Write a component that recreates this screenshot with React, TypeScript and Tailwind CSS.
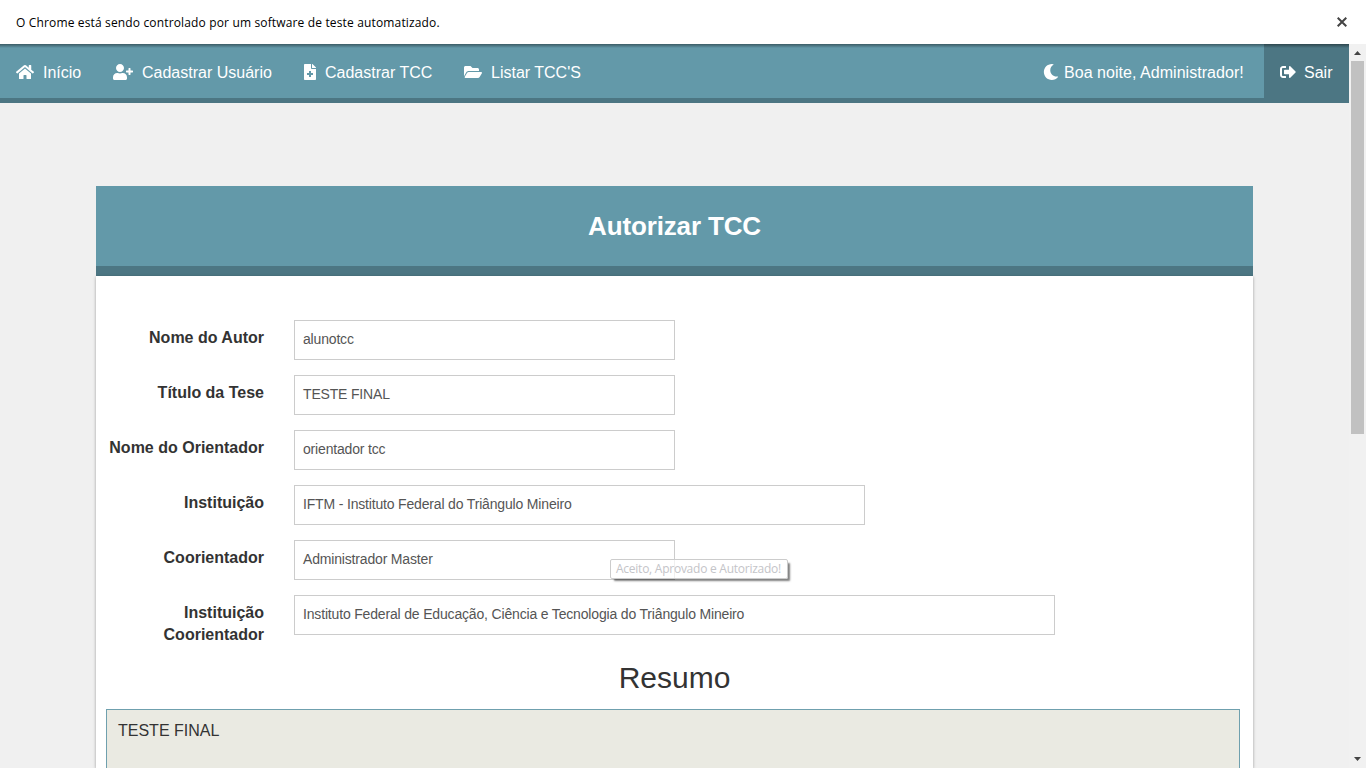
import type { ReactNode } from "react";
import {
  FaFileMedical,
  FaFolderOpen,
  FaHome,
  FaMoon,
  FaSignOutAlt,
  FaUserPlus,
} from "react-icons/fa";

function NavItem({ icon, label, className }: { icon: ReactNode; label: string; className: string }) {
  return (
    <a className={`flex h-full shrink-0 items-center whitespace-nowrap pl-4 ${className}`}>
      <span className="shrink-0 pb-px">{icon}</span>
      <span className="leading-6">{label}</span>
    </a>
  );
}

function Field({ label, value, width, badge }: { label: ReactNode; value: string; width: string; badge?: ReactNode }) {
  return (
    <div className="mb-[15px] flex h-10">
      <label className="w-[168px] shrink-0 pt-[7px] text-right text-base font-bold leading-[22px] text-[#333]">
        {label}
      </label>
      <div
        className={`relative ml-[30px] flex h-10 items-center border border-[#ccc] bg-white px-2 pb-0.5 text-sm text-[#555] ${width}`}
      >
        <span className="whitespace-nowrap tracking-[-0.17px]">{value}</span>
        {badge}
      </div>
    </div>
  );
}

function Tooltip() {
  return (
    <div className="absolute left-[315px] top-[18px] flex h-5 w-[178px] items-center rounded-[2px] border border-[#ccc] bg-white/70 pl-[5px] font-['Open_Sans',sans-serif] text-[12px] tracking-[-0.25px] text-[#c4c4c8] shadow-[3px_3px_2px_-1px_rgba(0,0,0,0.5)]">
      <span className="whitespace-nowrap">Aceito, Aprovado e Autorizado!</span>
    </div>
  );
}

export default function App() {
  return (
    <div className="flex h-[768px] w-[1366px] flex-col overflow-hidden bg-[#f0f0f0] font-['Liberation_Sans',Arial,sans-serif]">
      <div className="flex h-11 shrink-0 items-center justify-between bg-white pl-4 pr-[19px]">
        <span className="whitespace-nowrap pt-px font-['Open_Sans',sans-serif] text-[12px] tracking-[0.15px] text-black">
          O Chrome está sendo controlado por um software de teste automatizado.
        </span>
        <svg width="10" height="10" viewBox="0 0 10 10" stroke="#444" strokeWidth="2">
          <path d="M0.7 0.7 9.3 9.3M9.3 0.7 0.7 9.3" />
        </svg>
      </div>
      <div className="flex min-h-0 flex-1">
        <div className="relative flex w-[1349px] flex-col">
          <div className="pointer-events-none absolute inset-x-0 top-0 z-10 h-1 bg-linear-to-b from-black/40 to-transparent" />
          <nav className="flex h-[59px] shrink-0 justify-between border-b-[5px] border-[#4c7683] bg-[#6399a9] text-base text-white">
            <div className="flex pb-px pt-1">
              <NavItem className="w-[97px]" icon={<FaHome className="mr-[9px] h-4 w-[18px]" />} label="Início" />
              <NavItem className="w-[191px]" icon={<FaUserPlus className="mr-[9px] h-4 w-5" />} label="Cadastrar Usuário" />
              <NavItem className="w-[160px]" icon={<FaFileMedical className="mr-[9px] h-4 w-3" />} label="Cadastrar TCC" />
              <NavItem className="w-[160px]" icon={<FaFolderOpen className="mr-[9px] h-4 w-[18px]" />} label="Listar TCC'S" />
            </div>
            <div className="flex">
              <NavItem className="w-[236px] pb-px pt-1 tracking-[0.04px]" icon={<FaMoon className="-ml-px mr-[5px] h-4 w-4" />} label="Boa noite, Administrador!" />
              <NavItem className="w-[85px] bg-[#4c7683] pb-px pt-1" icon={<FaSignOutAlt className="mr-2 h-4 w-4" />} label="Sair" />
            </div>
          </nav>
          <main className="ml-24 mt-[83px] flex min-h-0 w-[1157px] flex-1 flex-col">
            <h1 className="flex h-[90px] shrink-0 items-center justify-center border-b-10 border-[#4c7683] bg-[#6399a9] text-[26px] font-bold tracking-[-0.15px] text-white">
              Autorizar TCC
            </h1>
            <div className="flex min-h-0 flex-1 flex-col bg-white shadow-[0_1px_3px_rgba(0,0,0,0.35)]">
              <div className="pt-11">
                <Field label="Nome do Autor" value="alunotcc" width="w-[381px]" />
                <Field label="Título da Tese" value="TESTE FINAL" width="w-[381px]" />
                <Field label="Nome do Orientador" value="orientador tcc" width="w-[381px]" />
                <Field label="Instituição" value="IFTM - Instituto Federal do Triângulo Mineiro" width="w-[571px]" />
                <Field label="Coorientador" value="Administrador Master" width="w-[381px]" badge={<Tooltip />} />
                <Field
                  label={<>Instituição<br />Coorientador</>}
                  value="Instituto Federal de Educação, Ciência e Tecnologia do Triângulo Mineiro"
                  width="w-[761px]"
                />
              </div>
              <h2 className="mt-[11px] text-center text-[30px] leading-[33px] text-[#333]">Resumo</h2>
              <div className="ml-2.5 mt-[15px] h-40 w-[1134px] shrink-0 border border-[#6fa0ae] bg-[#eaeae2] px-[11px] py-[9px] text-base leading-[23px] text-[#333]">
                TESTE FINAL
              </div>
            </div>
          </main>
        </div>
        <div className="flex w-[17px] flex-col items-center justify-between bg-[#f1f1f1]">
          <div className="flex flex-col items-center">
            <svg width="17" height="17" viewBox="0 0 17 17" fill="#444">
              <path d="M5 11 8.5 7 12 11Z" />
            </svg>
            <div className="h-[373px] w-[13px] bg-[#c1c1c1]" />
          </div>
          <svg width="17" height="17" viewBox="0 0 17 17" fill="#444">
            <path d="M5 6 8.5 10 12 6Z" />
          </svg>
        </div>
      </div>
    </div>
  );
}
